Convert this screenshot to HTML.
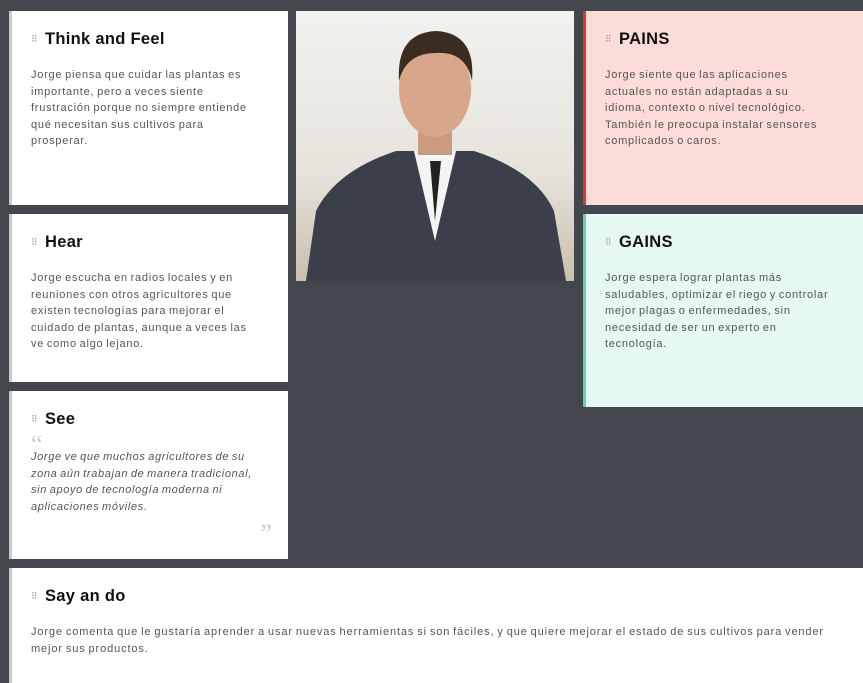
<!DOCTYPE html>
<html><head><meta charset="utf-8"><style>
*{margin:0;padding:0;box-sizing:border-box}
body{width:863px;height:683px;background:#43464d;font-family:"Liberation Sans",sans-serif;position:relative;overflow:hidden}
.c{position:absolute;background:#fff;border-left:3px solid #c3cbd3;padding:18px 10px 0 19px;overflow:hidden}
.h{font-size:16.5px;font-weight:bold;color:#111;display:flex;align-items:center;height:20px;letter-spacing:0.3px}
.h i{font-style:normal;font-size:9px;color:#999;width:14px;letter-spacing:-1px;font-weight:normal}
.t{font-size:11px;line-height:16.6px;color:#555;margin-top:18px;letter-spacing:0.75px;word-spacing:-1px;white-space:nowrap}
</style></head><body>
<div class="c" style="left:9px;top:11px;width:279px;height:194px"><div class="h"><i>⠿</i>Think and Feel</div><div class="t">Jorge piensa que cuidar las plantas es<br>importante, pero a veces siente<br>frustración porque no siempre entiende<br>qué necesitan sus cultivos para<br>prosperar.</div></div>
<div class="c" style="left:9px;top:214px;width:279px;height:168px"><div class="h"><i>⠿</i>Hear</div><div class="t">Jorge escucha en radios locales y en<br>reuniones con otros agricultores que<br>existen tecnologías para mejorar el<br>cuidado de plantas, aunque a veces las<br>ve como algo lejano.</div></div>
<div class="c" style="left:9px;top:391px;width:279px;height:168px"><div class="h"><i>⠿</i>See</div><div style="font-size:26px;color:#ccc;font-family:'Liberation Serif',serif;height:18px;line-height:28px;margin-top:2px">“</div><div class="t" style="font-style:italic;margin-top:0;letter-spacing:0.65px">Jorge ve que muchos agricultores de su<br>zona aún trabajan de manera tradicional,<br>sin apoyo de tecnología moderna ni<br>aplicaciones móviles.</div><div style="position:absolute;right:16px;top:128px;font-size:26px;color:#ccc;font-family:'Liberation Serif',serif">”</div></div>
<div style="position:absolute;left:296px;top:11px;width:278px;height:270px;background:linear-gradient(180deg,#f2f2f0,#e6e3dc 60%,#c9c0ad);overflow:hidden">
<svg width="278" height="270" viewBox="0 0 278 270">
<path d="M10 270 L20 200 Q40 160 100 140 L178 140 Q240 160 258 200 L270 270Z" fill="#3a3f4a"/>
<path d="M118 140 L139 230 L160 140Z" fill="#f4f4f4"/>
<path d="M134 150 L139 210 L145 150Z" fill="#222"/>
<rect x="122" y="100" width="34" height="44" fill="#c99a80"/>
<ellipse cx="139" cy="78" rx="36" ry="48" fill="#d8a68a"/>
<path d="M103 70 Q100 22 140 20 Q180 22 176 70 Q170 40 140 42 Q110 42 103 70Z" fill="#3b2c22"/>
</svg></div>
<div class="c" style="left:583px;top:11px;width:280px;height:194px;background:#fcdcd9;border-left-color:#e03a22"><div class="h"><i>⠿</i>PAINS</div><div class="t">Jorge siente que las aplicaciones<br>actuales no están adaptadas a su<br>idioma, contexto o nivel tecnológico.<br>También le preocupa instalar sensores<br>complicados o caros.</div></div>
<div class="c" style="left:583px;top:214px;width:280px;height:193px;background:#e6f8f4;border-left-color:#5dd3b5"><div class="h"><i>⠿</i>GAINS</div><div class="t">Jorge espera lograr plantas más<br>saludables, optimizar el riego y controlar<br>mejor plagas o enfermedades, sin<br>necesidad de ser un experto en<br>tecnología.</div></div>
<div class="c" style="left:9px;top:568px;width:854px;height:115px"><div class="h"><i>⠿</i>Say an do</div><div class="t" style="letter-spacing:0.88px">Jorge comenta que le gustaría aprender a usar nuevas herramientas si son fáciles, y que quiere mejorar el estado de sus cultivos para vender<br>mejor sus productos.</div></div>
</body></html>
